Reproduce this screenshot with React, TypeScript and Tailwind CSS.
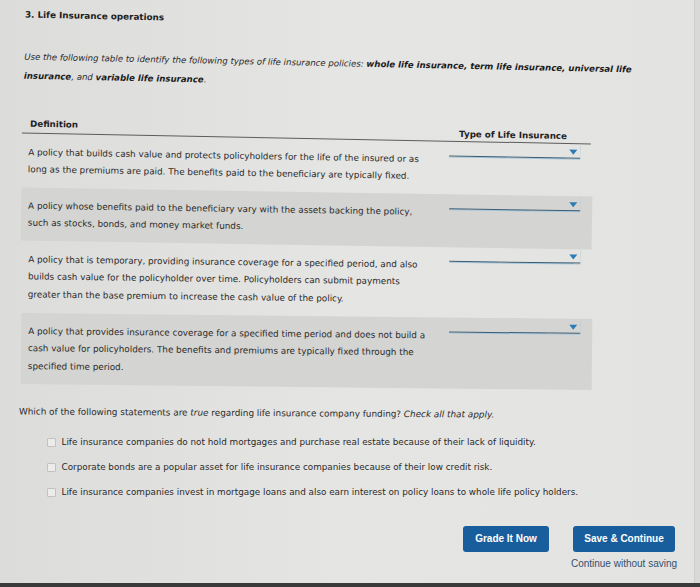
import React from 'react';

type Row = {
  lines: string[];
  shaded: boolean;
  rot: string;
};

const rows: Row[] = [
  {
    lines: [
      'A policy that builds cash value and protects policyholders for the life of the insured or as',
      'long as the premiums are paid. The benefits paid to the beneficiary are typically fixed.',
    ],
    shaded: false,
    rot: 'rotate-[1deg]',
  },
  {
    lines: [
      'A policy whose benefits paid to the beneficiary vary with the assets backing the policy,',
      'such as stocks, bonds, and money market funds.',
    ],
    shaded: true,
    rot: 'rotate-[0.9deg]',
  },
  {
    lines: [
      'A policy that is temporary, providing insurance coverage for a specified period, and also',
      'builds cash value for the policyholder over time. Policyholders can submit payments',
      'greater than the base premium to increase the cash value of the policy.',
    ],
    shaded: false,
    rot: 'rotate-[0.75deg]',
  },
  {
    lines: [
      'A policy that provides insurance coverage for a specified time period and does not build a',
      'cash value for policyholders. The benefits and premiums are typically fixed through the',
      'specified time period.',
    ],
    shaded: true,
    rot: 'rotate-[0.6deg]',
  },
];

const options = [
  'Life insurance companies do not hold mortgages and purchase real estate because of their lack of liquidity.',
  'Corporate bonds are a popular asset for life insurance companies because of their low credit risk.',
  'Life insurance companies invest in mortgage loans and also earn interest on policy loans to whole life policy holders.',
];

function Dropdown() {
  return (
    <div className="ml-auto mr-[12px] mt-[1px] flex h-[14px] w-[131px] shrink-0 items-start justify-end border-b border-[#3e5d72] shadow-[0_1px_0_#a6c6dc]">
      {/* little blue caret sitting above the line */}
      <span className="mr-[3px] mt-[5px] h-0 w-0 border-l-[4px] border-r-[4px] border-t-[5px] border-l-transparent border-r-transparent border-t-[#2a7bb6]" />
    </div>
  );
}

export default function App() {
  return (
    <div className="h-[587px] w-[700px] overflow-hidden bg-[#d9d9d7]">
      <div className="flex h-[583px] w-[695px] flex-col border-r border-[#cdcdcb] bg-linear-to-r from-[#dcdcda] via-[#e5e5e3] to-[#e3e3e1] font-['DejaVu_Sans','Open_Sans',sans-serif] text-[#2a2a2a]">
        {/* Title */}
        <div className="ml-[25px] mt-[10px] w-fit rotate-[1.2deg] whitespace-nowrap text-[8.8px] font-bold leading-[12px] text-[#1e1e1e]">
          3. Life Insurance operations
        </div>

        {/* Instructions */}
        <div className="ml-[24px] mt-[32px] w-fit rotate-[1.2deg] whitespace-nowrap text-[8.6px] italic leading-[18.5px]">
          Use the following table to identify the following types of life insurance policies:{' '}
          <b className="font-bold text-[#1a1a1a]">whole life insurance, term life insurance, universal life</b>
          <br />
          <b className="font-bold text-[#1a1a1a]">insurance</b>, and{' '}
          <b className="font-bold text-[#1a1a1a]">variable life insurance</b>.
        </div>

        {/* Table header */}
        <div className="ml-[22px] mt-[31.8px] flex w-[569px] rotate-[1.1deg] items-end justify-between border-b border-[#5c5c5c] text-[8.7px] font-bold leading-[12px] text-[#1e1e1e]">
          <span className="pb-[3px] pl-[8px]">Definition</span>
          <span className="pb-[1px] pr-[24px]">Type of Life Insurance</span>
        </div>

        {/* Table rows */}
        <div className="flex flex-col">
          {rows.map((row, i) => (
            <div
              key={i}
              className={`ml-[21px] flex w-[571px] items-start ${row.rot} ${row.shaded ? 'bg-[#d4d4d2]' : ''}`}
            >
              <div className="whitespace-nowrap pb-[8px] pl-[7px] pt-[9.5px] text-[8.8px] leading-[17.8px]">
                {row.lines.map((line, j) => (
                  <div key={j}>{line}</div>
                ))}
              </div>
              <Dropdown />
            </div>
          ))}
        </div>

        {/* Question */}
        <div className="ml-[19px] mt-[20px] w-fit rotate-[0.37deg] whitespace-nowrap text-[8.85px] leading-[12px]">
          Which of the following statements are <i>true</i> regarding life insurance company funding?{' '}
          <i>Check all that apply.</i>
        </div>

        <div className="ml-[46.5px] mt-[17.5px] flex flex-col gap-[13px]">
          {options.map((opt, i) => (
            <label key={i} className="flex items-center gap-[6px] whitespace-nowrap text-[8.82px] leading-[12px]">
              <span className="h-[9px] w-[9px] shrink-0 rounded-[1px] border border-[#c2c2c0] bg-[#ececea]" />
              <span>{opt}</span>
            </label>
          ))}
        </div>

        {/* Actions */}
        <div className="mt-[27.3px] flex justify-end gap-[24px] pr-[19px] font-['Liberation_Sans',Arial,sans-serif]">
          <button className="h-[26px] w-[86px] rounded-[3px] bg-[#185e9c] text-[10px] font-bold text-white">
            Grade It Now
          </button>
          <div className="flex w-[102px] flex-col items-center">
            <button className="h-[26px] w-[102px] rounded-[3px] bg-[#185e9c] text-[10px] font-bold text-white">
              Save &amp; Continue
            </button>
            <span className="mt-[6px] whitespace-nowrap text-[10px] leading-[12px] text-[#34506f]">
              Continue without saving
            </span>
          </div>
        </div>
      </div>
      <div className="h-[4px] w-[700px] bg-[#3a3a3a]" />
    </div>
  );
}
